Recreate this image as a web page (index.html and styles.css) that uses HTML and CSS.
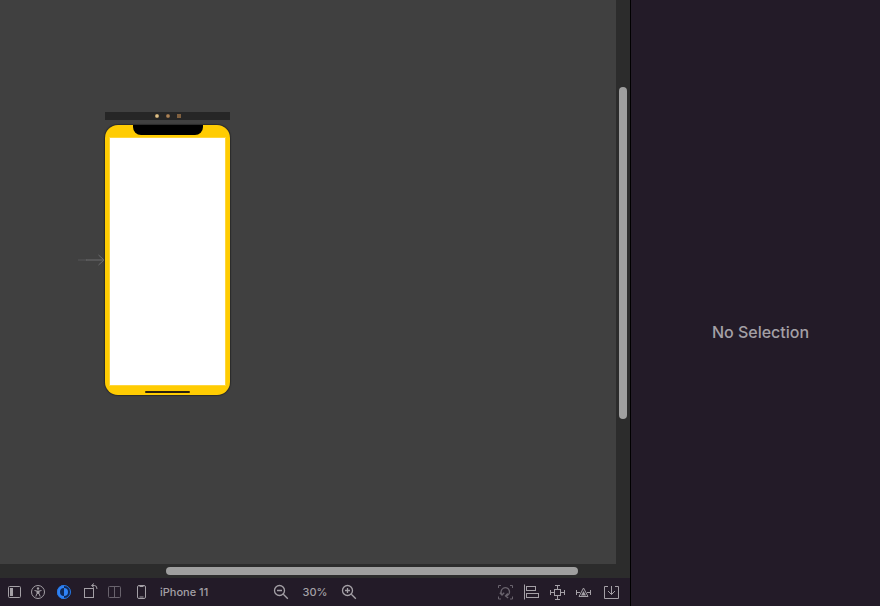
FILE: index.html
```html
<!DOCTYPE html>
<html lang="en">
<head>
<meta charset="utf-8">
<meta name="viewport" content="width=device-width, initial-scale=1">
<title>Interface Builder</title>
<link rel="stylesheet" href="styles.css">
</head>
<body>
<main class="editor">
  <section class="canvas" aria-label="Storyboard canvas">
    <svg class="entry-arrow" viewBox="0 0 27 14" aria-hidden="true"><path class="shaft" d="M0 7h9"/><path d="M8 7h18M20.500 2l5.500 5l-5.500 5"/></svg>
    <div class="scene">
      <div class="scene-dock"><i class="dot controller"></i><i class="dot responder"></i><i class="dot exit"></i></div>
      <div class="phone">
        <div class="notch"></div>
        <div class="screen"></div>
        <div class="home-bar"></div>
      </div>
    </div>
  </section>
  <div class="track vertical"><div class="thumb"></div></div>
  <div class="track horizontal"><div class="thumb"></div></div>
  <footer class="toolbar">
    <div class="tools">
      <button type="button" aria-label="Document outline"><svg viewBox="0 0 16 16"><rect x="2.500" y="2.500" width="12" height="11" rx="1"/><path class="solid" d="M4 4h3v8H4z"/></svg></button>
      <button type="button" aria-label="Accessibility"><svg viewBox="0 0 16 16"><circle cx="7" cy="8" r="6.500"/><circle class="solid" cx="7" cy="4.500" r="1.200"/><path d="M3.500 6.500l2.500.6h2l2.500-.6M6 7v2.500L4.800 12.500M8 7v2.500l1.200 3M6 9.300h2"/><path class="solid" d="M6 7h2v2.800H6z"/></svg></button>
      <button type="button" aria-label="Appearance"><svg viewBox="0 0 16 16"><circle class="navy" cx="8" cy="8" r="7"/><path class="blue" d="M8 1a7 7 0 0 0 0 14v-3a4 4 0 0 1 0-8z"/><path class="blue" d="M8 4a4 4 0 0 1 0 8z"/><circle class="blue-ring" cx="8" cy="8" r="6.500"/></svg></button>
      <button type="button" aria-label="Orientation"><svg viewBox="0 0 16 16"><rect x="3.500" y="4.500" width="9" height="9"/><path d="M11 1.500h2.500q2.500 0 2.500 3.500M13-.5l-2.500 2l2.500 2"/></svg></button>
      <button type="button" class="dim" aria-label="Split view"><svg viewBox="0 0 16 16"><rect x="2.500" y="2.500" width="12" height="11" rx="1"/><path d="M8.500 2.500v11"/></svg></button>
      <button type="button" class="device"><svg viewBox="0 0 16 16" aria-hidden="true"><rect x="6.500" y="1.500" width="8" height="13" rx="1.500"/><path d="M8.500 2.500h4M8.500 13h4"/></svg><span>iPhone 11</span></button>
    </div>
    <div class="zoom">
      <button type="button" aria-label="Zoom out"><svg class="bold" viewBox="0 0 16 16"><circle cx="6.500" cy="6.500" r="5"/><path d="M4 6.500h5M10.300 10.300l4.500 4.500"/></svg></button>
      <button type="button" class="level">30%</button>
      <button type="button" aria-label="Zoom in"><svg class="bold" viewBox="0 0 16 16"><circle cx="6.500" cy="6.500" r="5"/><path d="M4 6.500h5M6.500 4v5M10.300 10.300l4.500 4.500"/></svg></button>
    </div>
    <div class="layout">
      <button type="button" class="dim" aria-label="Update frames"><svg viewBox="0 0 16 16"><path d="M.5 4V1.500h2.500M12 1.500h2.500V4M.5 12.500V15h2.500M12 15h2.500v-2.500"/><path class="bold" d="M4 10.500a4.200 4.200 0 1 1 4 1.500M1.800 8.800l2.200 2.200l2.200-2.200M9.800 9.500L7.500 12l2.700 2"/></svg></button>
      <button type="button" aria-label="Align"><svg viewBox="0 0 16 16"><path d="M.5.5v15"/><rect x="2.500" y="2.500" width="9" height="4"/><rect x="2.500" y="9.500" width="12" height="4"/></svg></button>
      <button type="button" aria-label="Add constraints"><svg viewBox="0 0 16 16"><rect x="4.500" y="5.500" width="6" height="6"/><path d="M7.500 2v3M5 1.500h5M7.500 12v3M5 15.500h5M1 8.500h3M.5 6v5M11 8.500h3M14.500 6v5"/></svg></button>
      <button type="button" aria-label="Resolve layout issues"><svg viewBox="0 0 16 16"><path d="M7.500 4l4.500 8.500H3zM.5 6v5M1 8.500h3M14.500 6v5M11 8.500h3"/><path class="solid" d="M7.500 7l2.500 4.500H5z"/></svg></button>
      <button type="button" class="embed" aria-label="Embed in"><svg viewBox="0 0 18 16"><path d="M6 2.500H2.500v12h14v-12H13M9.500 2v8.500M6 7l3.500 3.500L13 7"/></svg></button>
    </div>
  </footer>
</main>
<aside class="inspector"><p>No Selection</p></aside>
</body>
</html>
```
FILE: styles.css
```css
* { box-sizing: border-box; }

body {
  margin: 0;
  min-height: 100vh;
  display: grid;
  grid-template-columns: 1fr 250px;
  background: #231b28;
  color: #a4a0a6;
  font-family: Inter, "Liberation Sans", sans-serif;
}

.editor {
  display: grid;
  grid-template-columns: 1fr 14px;
  grid-template-rows: 1fr 14px 28px;
}

.canvas {
  position: relative;
  overflow: hidden;
  background: #404040;
}

.scene {
  position: absolute;
  left: 105px;
  top: 112px;
  width: 125px;
}

.scene-dock {
  display: flex;
  align-items: center;
  justify-content: center;
  gap: 7px;
  height: 8px;
  margin-bottom: 5px;
  background: #262626;
}

.dot {
  width: 4px;
  height: 4px;
  border-radius: 2px;
}
.controller { background: radial-gradient(#f0d8a0, #a07c48); }
.responder { background: radial-gradient(#b89468, #80552f); }
.exit { border-radius: 0; background: #80603f; }

.phone {
  display: flex;
  flex-direction: column;
  align-items: center;
  height: 270px;
  padding: 0 5px 2px;
  border-radius: 13px;
  background: #ffcc02;
  box-shadow: 0 0 1px 1px #2b2b2b;
}

.notch {
  width: 70px;
  height: 10px;
  border-radius: 0 0 8px 8px;
  background: #000;
}

.screen {
  flex: 1;
  width: 100%;
  margin: 3px 0 6px;
  background: #fff;
  box-shadow: 0 0 0 1px #ffdf7080;
}

.home-bar {
  width: 45px;
  height: 2px;
  border-radius: 1px;
  background: #2a2110;
}

.entry-arrow {
  position: absolute;
  left: 78px;
  top: 253px;
  width: 27px;
  height: 14px;
  fill: none;
  stroke: #6c6c6f;
}
.shaft { stroke: #555557; }

.track {
  display: grid;
  background: #2c2c2c;
}
.vertical {
  grid-template-rows: 87fr 332fr 145fr;
  padding: 0 3px;
}
.vertical .thumb { grid-row: 2; }
.horizontal {
  grid-column: 1 / -1;
  grid-template-columns: 166fr 412fr 52fr;
  padding: 3px 0;
}
.horizontal .thumb { grid-column: 2; }
.thumb {
  border-radius: 4px;
  background: #9f9f9f;
}

.toolbar {
  grid-column: 1 / -1;
  display: grid;
  grid-template-columns: 1fr auto 1fr;
  align-items: center;
  padding: 0 10px 0 6px;
  background: #231b28;
}

.tools, .zoom, .layout {
  display: flex;
  align-items: center;
}
.tools { gap: 9px; }
.zoom { gap: 14px; padding-left: 4px; }
.layout { gap: 10px; justify-content: flex-end; }

button {
  display: flex;
  align-items: center;
  min-width: 16px;
  height: 16px;
  padding: 0;
  border: 0;
  background: none;
  color: #a4a0a6;
  font: 500 11px/16px Inter, "Liberation Sans", sans-serif;
  white-space: nowrap;
}
.device { gap: 13px; }
.dim { color: #69636d; }

button svg {
  width: 16px;
  height: 16px;
  overflow: visible;
  fill: none;
  stroke: currentColor;
}
.embed svg { width: 18px; }

.bold { stroke-width: 1.3; }
.solid { fill: currentColor; stroke: none; }
.blue { fill: #2f83f7; stroke: none; }
.navy { fill: #102a58; stroke: none; }
.blue-ring { stroke: #2878e4; }

.inspector {
  display: grid;
  place-items: center;
  padding: 58px 0 0 10px;
  border-left: 1px solid #000;
}
.inspector p {
  margin: 0;
  font-size: 16px;
  line-height: 20px;
  font-weight: 500;
}
```
